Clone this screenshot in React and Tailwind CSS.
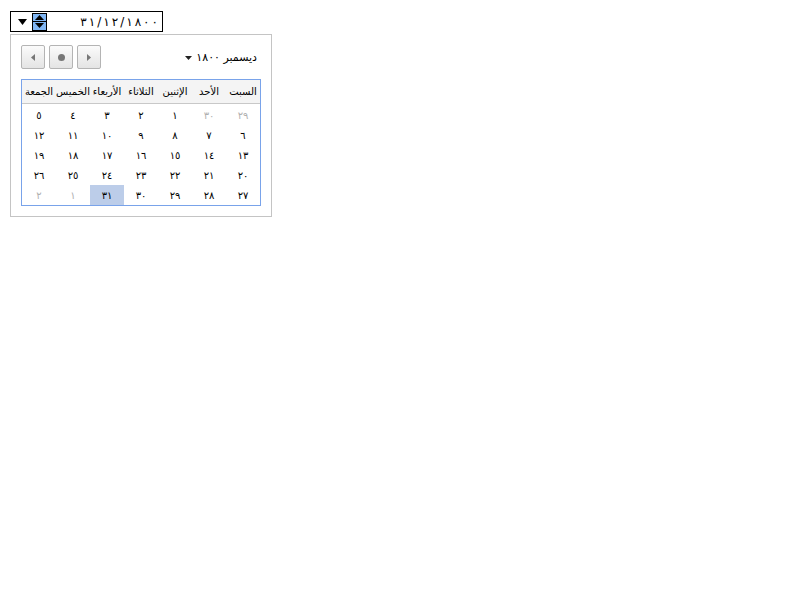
import React from 'react';

const headers = ['السبت', 'الأحد', 'الإثنين', 'الثلاثاء', 'الأربعاء', 'الخميس', 'الجمعة'];

const weeks = [
  [['٢٩', 1], ['٣٠', 1], ['١'], ['٢'], ['٣'], ['٤'], ['٥']],
  [['٦'], ['٧'], ['٨'], ['٩'], ['١٠'], ['١١'], ['١٢']],
  [['١٣'], ['١٤'], ['١٥'], ['١٦'], ['١٧'], ['١٨'], ['١٩']],
  [['٢٠'], ['٢١'], ['٢٢'], ['٢٣'], ['٢٤'], ['٢٥'], ['٢٦']],
  [['٢٧'], ['٢٨'], ['٢٩'], ['٣٠'], ['٣١', 0, 1], ['١', 1], ['٢', 1]],
];

const dateChars = ['٣', '١', '/', '١', '٢', '/', '١', '٨', '٠', '٠'];

const NavButton = ({ children }) => (
  <div className="w-[24px] h-[24px] flex items-center justify-center rounded-[2px] border border-[#b4b4b4] bg-gradient-to-b from-[#fbfbfb] to-[#e4e4e4]">
    {children}
  </div>
);

const App = () => {
  return (
    <div className="pl-[10px] pt-[11px] text-black" style={{ fontFamily: '"DejaVu Sans", sans-serif' }}>
      {/* date input */}
      <div className="w-[153px] h-[21px] border border-black flex items-center bg-white">
        <svg width="9" height="6" viewBox="0 0 9 6" className="ml-[7px]">
          <path d="M0 0 H9 L4.5 6 Z" fill="#000" />
        </svg>
        <div className="ml-[5px] w-[15px] h-[18px] bg-[#80b6f4] border border-black flex flex-col">
          <div className="flex-1 flex items-center justify-center border-b border-black">
            <svg width="9" height="5" viewBox="0 0 9 5"><path d="M0 5 H9 L4.5 0 Z" fill="#000" /></svg>
          </div>
          <div className="flex-1 flex items-center justify-center">
            <svg width="9" height="5" viewBox="0 0 9 5"><path d="M0 0 H9 L4.5 5 Z" fill="#000" /></svg>
          </div>
        </div>
        <div className="flex-1 flex justify-end gap-[2px] pr-[4px] text-[12px] leading-none">
          {dateChars.map((c, i) => (
            <span key={i}>{c}</span>
          ))}
        </div>
      </div>

      {/* popup */}
      <div className="mt-[2px] w-[262px] h-[183px] border border-[#c4c4c4] bg-white pt-[10px] px-[10px]">
        <div className="flex items-center">
          <div className="flex gap-[4px]">
            <NavButton>
              <svg width="4" height="7" viewBox="0 0 4 7"><path d="M4 0 V7 L0 3.5 Z" fill="#777" /></svg>
            </NavButton>
            <NavButton>
              <div className="w-[7px] h-[7px] rounded-full bg-[#777]" />
            </NavButton>
            <NavButton>
              <svg width="4" height="7" viewBox="0 0 4 7"><path d="M0 0 V7 L4 3.5 Z" fill="#777" /></svg>
            </NavButton>
          </div>
          <div className="flex-1 flex items-center justify-end pr-[4px] gap-[4px] pt-[2px]">
            <svg width="7" height="4" viewBox="0 0 7 4"><path d="M0 0 H7 L3.5 4 Z" fill="#222" /></svg>
            <span className="text-[11px]" dir="rtl">ديسمبر ١٨٠٠</span>
          </div>
        </div>

        <div className="mt-[10px] w-[240px] border border-[#79a3ea]" dir="rtl">
          <div className="grid grid-cols-[repeat(7,34px)] h-[24px] bg-[#f4f4f4] border-b border-[#c8c8c8]">
            {headers.map((h) => (
              <div key={h} className="flex items-center justify-center text-[10px] whitespace-nowrap">{h}</div>
            ))}
          </div>
          {weeks.map((w, i) => (
            <div key={i} className={'grid grid-cols-[repeat(7,34px)] h-[20px] ' + (i === 0 ? 'mt-[1px]' : '')}>
              {w.map(([d, muted, sel], j) => (
                <div
                  key={j}
                  className={
                    'flex items-center justify-center text-[10px] ' +
                    (muted ? 'text-[#b0b0b0] ' : 'text-black ') +
                    (sel ? 'bg-[#bccde9]' : '')
                  }
                >
                  {d}
                </div>
              ))}
            </div>
          ))}
        </div>
      </div>
    </div>
  );
};

export default App;
